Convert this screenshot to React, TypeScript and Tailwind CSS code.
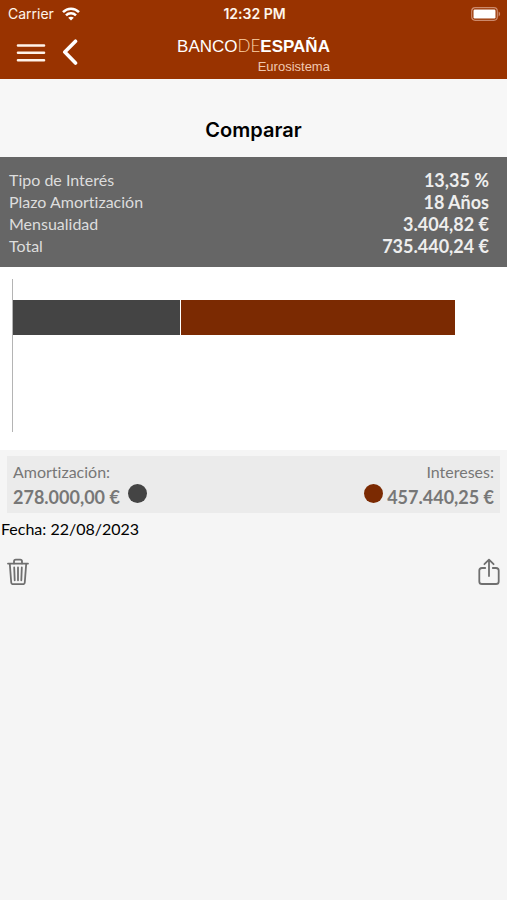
const loan = [
  { label: "Tipo de Interés", value: "13,35 %" },
  { label: "Plazo Amortización", value: "18 Años" },
  { label: "Mensualidad", value: "3.404,82 €" },
  { label: "Total", value: "735.440,24 €" },
];

const amortizacion = 278000;
const intereses = 457440.25;

function StatusBar() {
  return (
    <div className="grid h-7 grid-cols-3 items-center pr-1.5 pl-2 font-[Inter,sans-serif] text-sm leading-4 text-orange-50">
      <div className="flex items-center gap-2">
        <span>Carrier</span>
        <svg width="18" height="14" viewBox="0 0 18 14" fill="none" stroke="white" strokeWidth="2.5">
          <path d="M1 5.2C5.5 0.6 12.5 0.6 17 5.2" />
          <path d="M4 8.3C6.8 5.5 11.2 5.5 14 8.3" />
          <path d="M9 13.6L6.2 10.8C7.8 9.3 10.2 9.3 11.8 10.8Z" fill="white" stroke="none" />
        </svg>
      </div>
      <span className="text-center font-semibold">12:32 PM</span>
      <svg className="justify-self-end" width="30" height="14" viewBox="0 0 30 14">
        <rect x="0.7" y="0.7" width="25.6" height="12.6" rx="3.5" fill="none" stroke="#cc8a6c" strokeWidth="1.2" />
        <rect x="2.5" y="2.5" width="22" height="9" rx="1.2" fill="white" />
        <path d="M27.6 4.6C29.6 5.4 29.6 8.6 27.6 9.4Z" fill="#cc8a6c" />
      </svg>
    </div>
  );
}

function Header() {
  return (
    <header className="bg-[#993300] text-white">
      <StatusBar />
      <div className="grid h-[51px] grid-cols-[1fr_auto_1fr]">
        <div className="flex items-start gap-4 pt-2.5 pl-4">
          <button type="button" aria-label="Menú">
            <svg width="30" height="30" viewBox="0 0 30 30" stroke="#fff3ea" strokeWidth="2.6" strokeLinecap="round">
              <path d="M2 7.5H28M2 14.8H28M2 22.2H28" />
            </svg>
          </button>
          <button type="button" aria-label="Volver">
            <svg width="16" height="30" viewBox="0 0 16 30" fill="none" stroke="white" strokeWidth="3.6" strokeLinecap="round" strokeLinejoin="round">
              <path d="M13.5 3.2L2.8 14L13.5 25" />
            </svg>
          </button>
        </div>
        <div className="flex flex-col items-end pt-2 font-['Liberation_Sans',Arial,sans-serif]">
          <div className="text-[17px] leading-5">
            <span>BANCO</span>
            <span className="font-[Lato,sans-serif] font-light text-orange-200">DE</span>
            <span className="font-bold">ESPAÑA</span>
          </div>
          <div className="text-[13px] leading-5 text-[#f0c8b0]">Eurosistema</div>
        </div>
      </div>
    </header>
  );
}

function StackedBar() {
  const total = amortizacion + intereses;
  return (
    <div className="bg-white pt-3 pr-[52px] pb-[18px] pl-3">
      <div className="h-[153px] border-l border-[#b4b4b4] pt-[21px]">
        <div className="flex h-[35px] gap-px">
          <div className="bg-[#444444]" style={{ width: `${(amortizacion / total) * 100}%` }} />
          <div className="flex-1 bg-[#7b2a02]" />
        </div>
      </div>
    </div>
  );
}

function Legend() {
  return (
    <div className="mx-[7px] mt-1.5 flex justify-between bg-[#ebebeb] px-1.5 py-1 text-base leading-6 text-[#777777]">
      <div>
        <div>Amortización:</div>
        <div className="flex items-center gap-2">
          <strong className="text-lg leading-6">278.000,00 €</strong>
          <span className="mb-1.5 size-[19px] rounded-full bg-[#444444]" />
        </div>
      </div>
      <div className="text-right">
        <div>Intereses:</div>
        <div className="flex items-center justify-end gap-1">
          <span className="mb-1.5 size-[19px] rounded-full bg-[#7b2a02]" />
          <strong className="text-lg leading-6">457.440,25 €</strong>
        </div>
      </div>
    </div>
  );
}

export default function App() {
  return (
    <div className="min-h-screen bg-[#f5f5f5] font-[Lato,sans-serif] [font-variant-ligatures:none]">
      <Header />

      <h1 className="bg-[#f7f7f7] pt-[37px] pb-[13px] text-center font-[Inter,sans-serif] text-xl leading-7 font-semibold text-black">
        Comparar
      </h1>

      <dl className="bg-[#666666] pt-3 pr-[18px] pb-2.5 pl-[9px] text-base leading-[22px] text-[#dddddd]">
        {loan.map((row) => (
          <div key={row.label} className="flex justify-between">
            <dt>{row.label}</dt>
            <dd className="text-lg leading-[22px] font-bold text-[#eeeeee]">{row.value}</dd>
          </div>
        ))}
      </dl>

      <StackedBar />
      <Legend />

      <p className="mt-1 pl-px text-base leading-6 text-black">Fecha: 22/08/2023</p>

      <div className="mt-4 flex justify-between px-1.5">
        <button type="button" aria-label="Eliminar">
          <svg width="24" height="30" viewBox="0 0 24 30" fill="none" stroke="#6f6f6f" strokeWidth="1.8" strokeLinecap="round" strokeLinejoin="round">
            <path d="M2 6.6H22" />
            <path d="M3.8 6.8L5.2 25.2C5.3 26.5 6 27.2 7.2 27.2H16.8C18 27.2 18.7 26.5 18.8 25.2L20.2 6.8" />
            <path d="M8 6.4V4.4C8 3.3 8.7 2.6 9.8 2.6H14.2C15.3 2.6 16 3.3 16 4.4V6.4" />
            <path d="M8.2 10.5L8.7 23.3M12 10.5V23.3M15.8 10.5L15.3 23.3" />
          </svg>
        </button>
        <button type="button" aria-label="Compartir">
          <svg width="24" height="30" viewBox="0 0 24 30" fill="none" stroke="#6f6f6f" strokeWidth="1.8" strokeLinecap="round" strokeLinejoin="round">
            <path d="M8.2 11H5C3.3 11 2.3 12 2.3 13.6V24.4C2.3 26 3.3 27 5 27H19C20.7 27 21.7 26 21.7 24.4V13.6C21.7 12 20.7 11 19 11H15.8" />
            <path d="M12 19V2.6M7.4 7.2L12 2.6L16.6 7.2" />
          </svg>
        </button>
      </div>
    </div>
  );
}
